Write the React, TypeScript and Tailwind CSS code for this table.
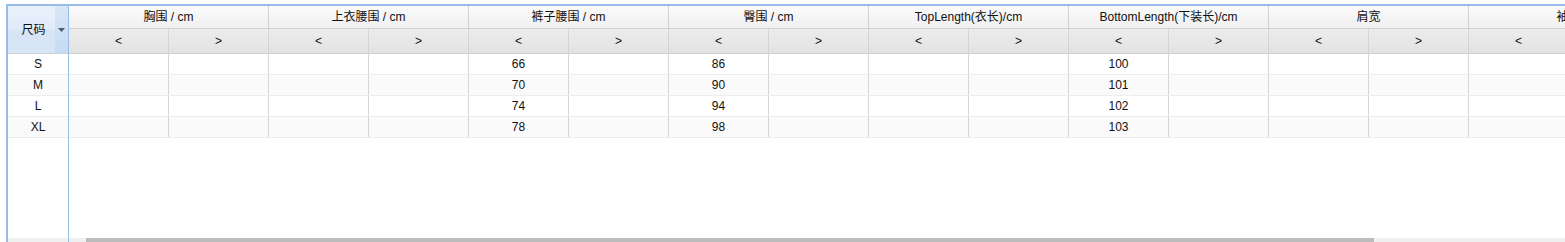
import React from "react";

const groups = [
  "胸围 / cm",
  "上衣腰围 / cm",
  "裤子腰围 / cm",
  "臀围 / cm",
  "TopLength(衣长)/cm",
  "BottomLength(下装长)/cm",
  "肩宽",
  "袖长",
];

const rows: { size: string; vals: Record<number, string> }[] = [
  { size: "S", vals: { 4: "66", 6: "86", 10: "100" } },
  { size: "M", vals: { 4: "70", 6: "90", 10: "101" } },
  { size: "L", vals: { 4: "74", 6: "94", 10: "102" } },
  { size: "XL", vals: { 4: "78", 6: "98", 10: "103" } },
];

const font = {
  fontFamily: '"Liberation Sans", "Noto Sans CJK SC", sans-serif',
};

export default function App() {
  return (
    <div
      className="w-[1565px] h-[242px] overflow-hidden bg-white pt-[4px] pl-[6px] text-[12px] text-[#111]"
      style={font}
    >
      <div className="flex h-[238px] border-t-2 border-l-2 border-[#99bbe8]">
        {/* locked column */}
        <div className="w-[61px] shrink-0 flex flex-col border-r border-[#99bbe8]">
          <div className="h-[48px] flex border-b border-[#d0d0d0] bg-[linear-gradient(#e8f0fb,#e2ecf9_45%,#d5e4f6_55%,#d8e6f7)]">
            <div className="flex-1 flex items-center justify-center pl-[4px] pt-[1px]">尺码</div>
            <div className="w-[13px] flex items-center justify-center bg-[linear-gradient(#d8e6f7,#c6dbf2)]">
              <svg width="7" height="4" viewBox="0 0 7 4">
                <path d="M0 0h7L3.5 4z" fill="#4d5d70" />
              </svg>
            </div>
          </div>
          {rows.map((r, i) => (
            <div
              key={r.size}
              className={`h-[21px] flex items-center justify-center border-b border-[#ededed] ${
                i % 2 ? "bg-[#fafafa]" : "bg-white"
              }`}
            >
              {r.size}
            </div>
          ))}
          <div className="flex-1" />
          <div className="h-[4px] bg-[#f0f0f0]" />
        </div>
        {/* scrolling area */}
        <div className="flex-1 min-w-0 flex flex-col overflow-hidden">
          <div className="flex flex-col w-[1600px]">
            <div className="flex h-[23px] border-b border-[#d0d0d0] bg-[linear-gradient(#fbfbfb,#f0f0f0)]">
              {groups.map((g) => (
                <div
                  key={g}
                  className="w-[200px] shrink-0 border-r border-[#d0d0d0] flex items-center justify-center whitespace-nowrap"
                >
                  {g}
                </div>
              ))}
            </div>
            <div className="flex h-[25px] border-b border-[#cfcfcf] bg-[linear-gradient(#ececec,#e3e3e3)]">
              {groups.map((g) => (
                <React.Fragment key={g}>
                  <div className="w-[100px] shrink-0 border-r border-[#d4d4d4] flex items-center justify-center">
                    &lt;
                  </div>
                  <div className="w-[100px] shrink-0 border-r border-[#d4d4d4] flex items-center justify-center">
                    &gt;
                  </div>
                </React.Fragment>
              ))}
            </div>
            {rows.map((r, i) => (
              <div
                key={r.size}
                className={`flex h-[21px] border-b border-[#ededed] ${
                  i % 2 ? "bg-[#fafafa]" : "bg-white"
                }`}
              >
                {Array.from({ length: 16 }).map((_, c) => (
                  <div
                    key={c}
                    className="w-[100px] shrink-0 border-r border-[#d6d6d6] flex items-center justify-center"
                  >
                    {r.vals[c] ?? ""}
                  </div>
                ))}
              </div>
            ))}
          </div>
          <div className="flex-1" />
          <div className="h-[4px] bg-[#efefef] pl-[17px]">
            <div className="w-[1288px] h-[4px] bg-[#bcbcbc]" />
          </div>
        </div>
      </div>
    </div>
  );
}
